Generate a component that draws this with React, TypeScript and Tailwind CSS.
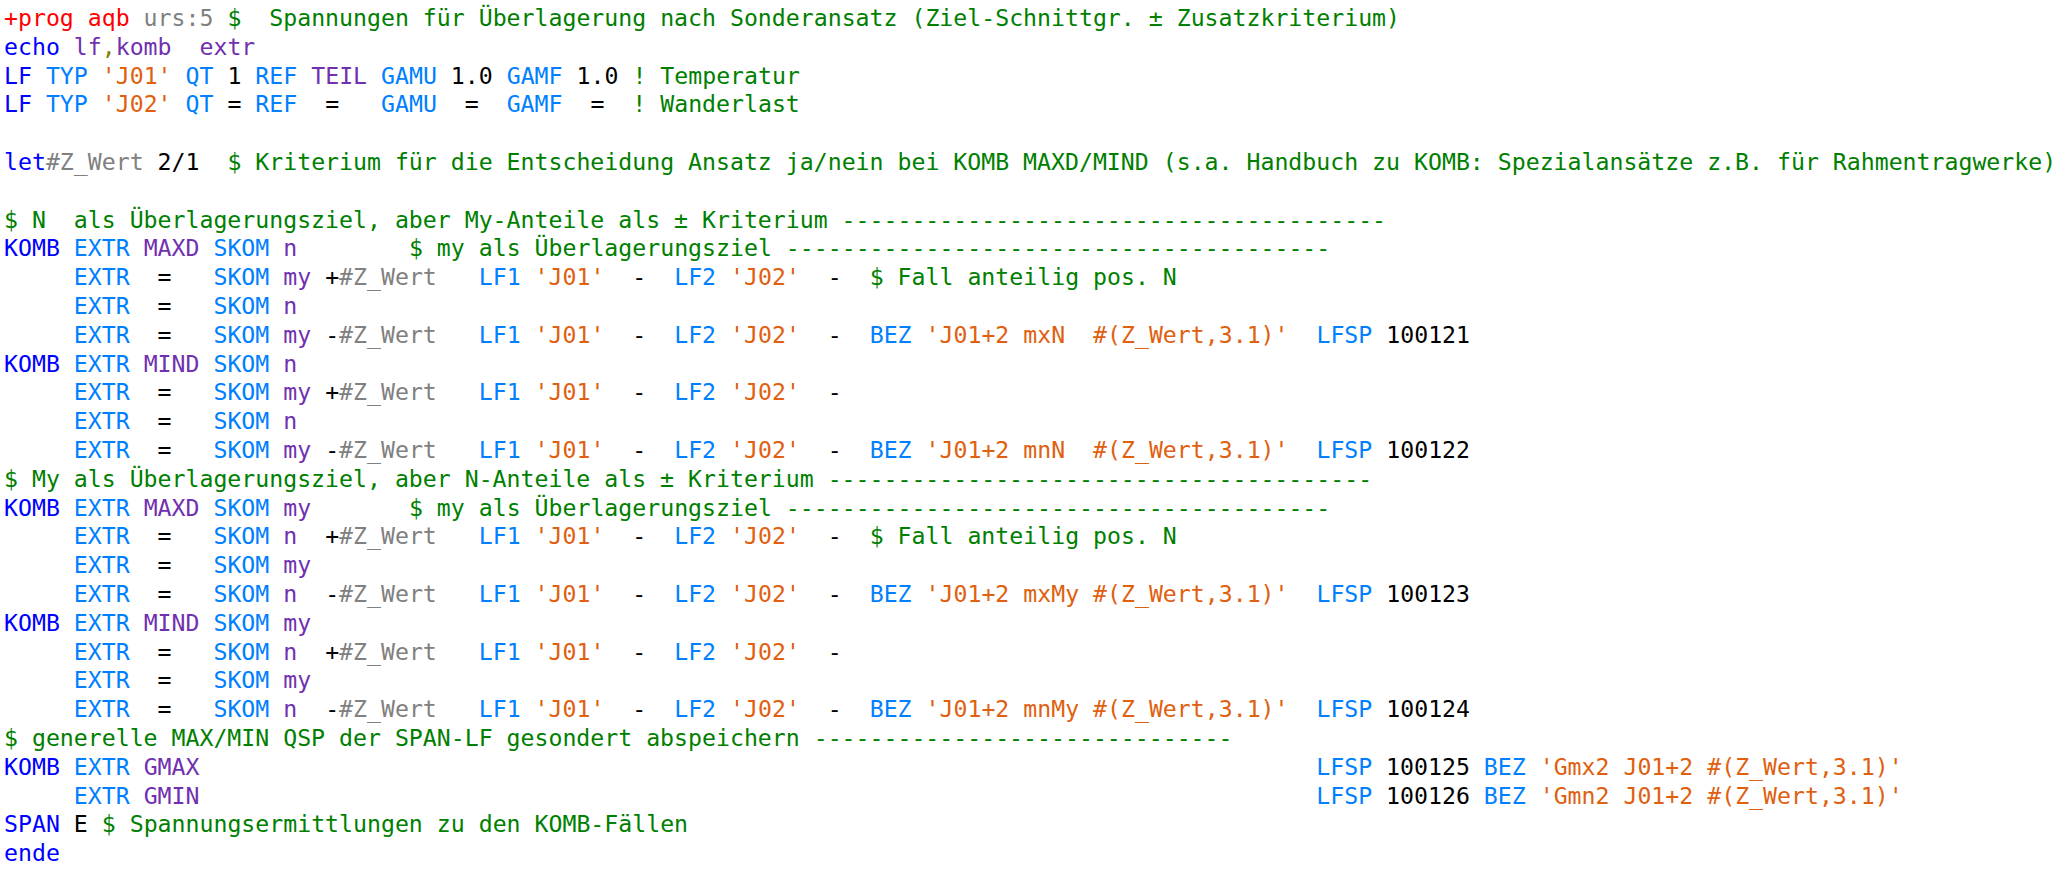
type Tok = [string, string];

// syntax colours of the editor
const KW = "text-[#0000ff]";
const OP = "text-[#0080ff]";
const TY = "text-[#7030b0]";
const STR = "text-[#e0600f]";
const CMT = "text-[#008000]";
const GRY = "text-[#808080]";
const RED = "text-[#ff0000]";
const NUM = "text-black";
const OLV = "text-[#808000]";

const dashes = (n: number) => "-".repeat(n);

function extrLine(v: string, sign: string, tail: Tok[]): Tok[] {
  return [
    ["", "     "],
    [OP, "EXTR"],
    [NUM, "  =   "],
    [OP, "SKOM"],
    ["", " "],
    [TY, v],
    ["", v === "n" ? "  " : " "],
    [NUM, sign],
    [GRY, "#Z_Wert"],
    ["", "   "],
    [OP, "LF1"],
    ["", " "],
    [STR, "'J01'"],
    [NUM, "  -  "],
    [OP, "LF2"],
    ["", " "],
    [STR, "'J02'"],
    [NUM, "  -"],
    ...tail,
  ];
}

const fall: Tok[] = [["", "  "], [CMT, "$ Fall anteilig pos. N"]];

const bez = (label: string, nr: string): Tok[] => [
  ["", "  "],
  [OP, "BEZ"],
  ["", " "],
  [STR, label],
  ["", "  "],
  [OP, "LFSP"],
  ["", " "],
  [NUM, nr],
];

const shortLine = (v: string): Tok[] => [
  ["", "     "],
  [OP, "EXTR"],
  [NUM, "  =   "],
  [OP, "SKOM"],
  ["", " "],
  [TY, v],
];

const kombHead = (mode: string, v: string, comment?: string): Tok[] => [
  [KW, "KOMB"],
  ["", " "],
  [OP, "EXTR"],
  ["", " "],
  [TY, mode],
  ["", " "],
  [OP, "SKOM"],
  ["", " "],
  [TY, v],
  ...(comment ? ([["", v === "n" ? "        " : "       "], [CMT, comment]] as Tok[]) : []),
];

const lines: Tok[][] = [
  [
    [RED, "+prog aqb"],
    ["", " "],
    [GRY, "urs:5"],
    ["", " "],
    [CMT, "$  Spannungen für Überlagerung nach Sonderansatz (Ziel-Schnittgr. ± Zusatzkriterium)"],
  ],
  [
    [KW, "echo"],
    ["", " "],
    [TY, "lf"],
    [OLV, ","],
    [TY, "komb  extr"],
  ],
  [
    [KW, "LF"], ["", " "], [OP, "TYP"], ["", " "], [STR, "'J01'"], ["", " "], [OP, "QT"], ["", " "],
    [NUM, "1"], ["", " "], [OP, "REF"], ["", " "], [TY, "TEIL"], ["", " "], [OP, "GAMU"], ["", " "],
    [NUM, "1.0"], ["", " "], [OP, "GAMF"], ["", " "], [NUM, "1.0"], ["", " "], [CMT, "! Temperatur"],
  ],
  [
    [KW, "LF"], ["", " "], [OP, "TYP"], ["", " "], [STR, "'J02'"], ["", " "], [OP, "QT"], [NUM, " = "],
    [OP, "REF"], [NUM, "  =   "], [OP, "GAMU"], [NUM, "  =  "], [OP, "GAMF"], [NUM, "  =  "],
    [CMT, "! Wanderlast"],
  ],
  [],
  [
    [KW, "let"],
    [GRY, "#Z_Wert"],
    [NUM, " 2/1  "],
    [CMT, "$ Kriterium für die Entscheidung Ansatz ja/nein bei KOMB MAXD/MIND (s.a. Handbuch zu KOMB: Spezialansätze z.B. für Rahmentragwerke)"],
  ],
  [],
  [[CMT, "$ N  als Überlagerungsziel, aber My-Anteile als ± Kriterium " + dashes(39)]],
  kombHead("MAXD", "n", "$ my als Überlagerungsziel " + dashes(39)),
  extrLine("my", "+", fall),
  shortLine("n"),
  extrLine("my", "-", bez("'J01+2 mxN  #(Z_Wert,3.1)'", "100121")),
  kombHead("MIND", "n"),
  extrLine("my", "+", []),
  shortLine("n"),
  extrLine("my", "-", bez("'J01+2 mnN  #(Z_Wert,3.1)'", "100122")),
  [[CMT, "$ My als Überlagerungsziel, aber N-Anteile als ± Kriterium " + dashes(39)]],
  kombHead("MAXD", "my", "$ my als Überlagerungsziel " + dashes(39)),
  extrLine("n", "+", fall),
  shortLine("my"),
  extrLine("n", "-", bez("'J01+2 mxMy #(Z_Wert,3.1)'", "100123")),
  kombHead("MIND", "my"),
  extrLine("n", "+", []),
  shortLine("my"),
  extrLine("n", "-", bez("'J01+2 mnMy #(Z_Wert,3.1)'", "100124")),
  [[CMT, "$ generelle MAX/MIN QSP der SPAN-LF gesondert abspeichern " + dashes(30)]],
  [
    [KW, "KOMB"], ["", " "], [OP, "EXTR"], ["", " "], [TY, "GMAX"], ["", " ".repeat(80)],
    [OP, "LFSP"], ["", " "], [NUM, "100125"], ["", " "], [OP, "BEZ"], ["", " "],
    [STR, "'Gmx2 J01+2 #(Z_Wert,3.1)'"],
  ],
  [
    ["", "     "], [OP, "EXTR"], ["", " "], [TY, "GMIN"], ["", " ".repeat(80)],
    [OP, "LFSP"], ["", " "], [NUM, "100126"], ["", " "], [OP, "BEZ"], ["", " "],
    [STR, "'Gmn2 J01+2 #(Z_Wert,3.1)'"],
  ],
  [
    [KW, "SPAN"], ["", " "], [NUM, "E"], ["", " "], [CMT, "$ Spannungsermittlungen zu den KOMB-Fällen"],
  ],
  [[KW, "ende"]],
];

export default function App() {
  return (
    <div className="min-h-screen bg-white pt-[4px] pl-[4px] font-['DejaVu_Sans_Mono',monospace] text-[23.2px] leading-[28.8px] text-black whitespace-pre">
      {lines.map((line, i) => (
        <div key={i} className="h-[28.8px]">
          {line.map(([cls, text], j) => (
            <span key={j} className={cls}>
              {text}
            </span>
          ))}
        </div>
      ))}
    </div>
  );
}
